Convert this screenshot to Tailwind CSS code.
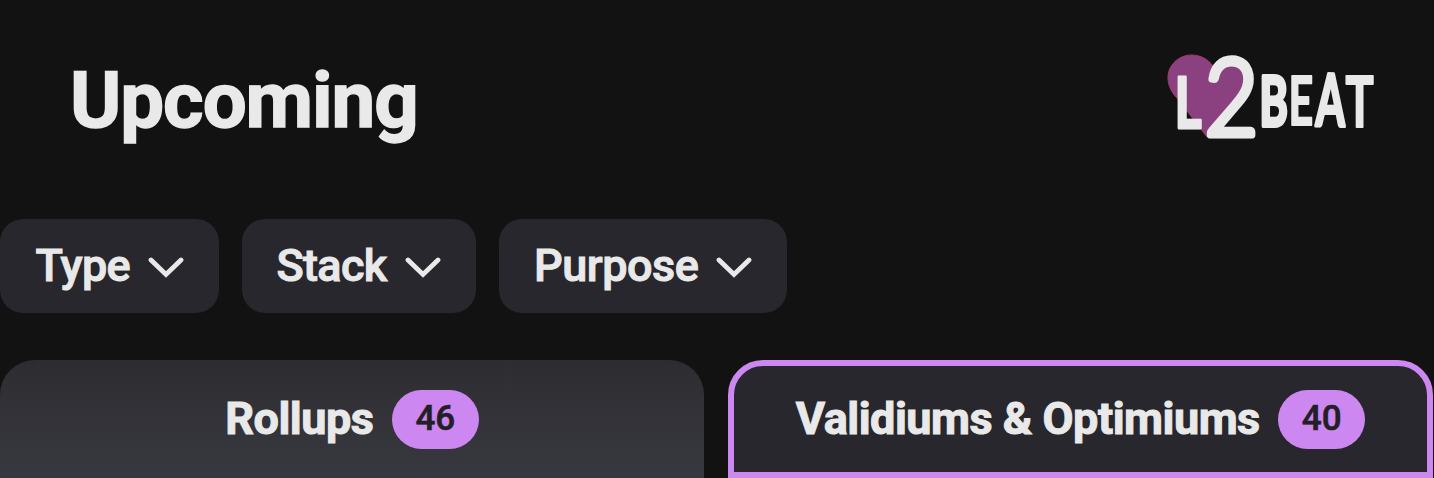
<!DOCTYPE html>
<html lang="en">

<head>
    <meta charset="UTF-8">
    <meta name="viewport" content="width=device-width, initial-scale=1.0">
    <title>Upcoming - L2BEAT</title>
    <script src="https://cdn.jsdelivr.net/npm/@tailwindcss/browser@4"></script>
</head>

<body class="bg-[#121212] text-[#e9e9e9] font-['Roboto',sans-serif] h-[478px] overflow-hidden">
    <!-- Header -->
    <header class="flex items-start justify-between h-[219px] pl-[70px] pr-[58px] pt-[54px]">
        <h1 class="mt-px text-[78px] leading-[92px] font-bold tracking-[-1.1px] [-webkit-text-stroke:1.4px_#e9e9e9]">Upcoming</h1>
        <svg class="w-[210px] h-[86px] overflow-visible" viewBox="1166 54 210 86" role="img" aria-label="L2BEAT">
            <path fill="#8b407f" stroke="#a03a68" stroke-width="1"
                d="M1207 137 L1177 98 C1166 87 1166 73 1172 65 C1182 51 1203 52 1213 66 C1222 56 1239 58 1247 68 C1252 77 1250 88 1243 97 Z" />
            <g fill="#e9e9e9" stroke="#e9e9e9" stroke-linejoin="round" stroke-linecap="round" font-family="Lato" font-size="100">
                <text transform="translate(1174.500 127.500) scale(.52 .7)" stroke-width="4" font-weight="700">L</text>
                <text transform="translate(1204.500 135) scale(.93 1.06)" stroke-width="6.500" font-weight="300">2</text>
                <text transform="translate(1259.500 126) scale(.43 .69)" stroke-width="6" font-weight="700">B</text>
                <text transform="translate(1288.500 124.500) scale(.43 .67)" stroke-width="3" font-weight="700">E</text>
                <text transform="rotate(1 1330 100) translate(1316 126) scale(.42 .72)" stroke-width="5" font-weight="700">A</text>
                <text transform="translate(1345.500 127) scale(.47 .71)" stroke-width="3" font-weight="700">T</text>
            </g>
        </svg>
    </header>

    <!-- Filters -->
    <div class="flex gap-[23.5px] text-[45px] font-medium tracking-[-0.7px] [-webkit-text-stroke:1px_#e9e9e9]">
        <button class="flex items-center gap-[18px] h-[94px] w-[218.5px] pl-[35.5px] rounded-[23px] bg-[#27272d]">
            Type
            <svg class="w-9 h-[21px] mt-[3px]" viewBox="0 0 36 21" fill="none" stroke="currentColor" stroke-width="4.800" stroke-linecap="round">
                <path d="M3 3 18 17.500 33 3" />
            </svg>
        </button>
        <button class="flex items-center gap-[18.5px] h-[94px] w-[233.5px] pl-[34.5px] rounded-[23px] bg-[#27272d]">
            Stack
            <svg class="w-9 h-[21px] mt-[3px]" viewBox="0 0 36 21" fill="none" stroke="currentColor" stroke-width="4.800" stroke-linecap="round">
                <path d="M3 3 18 17.500 33 3" />
            </svg>
        </button>
        <button class="flex items-center gap-[17.5px] h-[94px] w-[287.5px] pl-[35px] rounded-[23px] bg-[#27272d] tracking-[-0.5px]">
            Purpose
            <svg class="w-9 h-[21px] mt-[3px]" viewBox="0 0 36 21" fill="none" stroke="currentColor" stroke-width="4.800" stroke-linecap="round">
                <path d="M3 3 18 17.500 33 3" />
            </svg>
        </button>
    </div>

    <!-- Tabs -->
    <div class="flex gap-6 mt-[47px] h-[118px] text-[45px] font-bold tracking-[-0.5px] whitespace-nowrap [-webkit-text-stroke:1px_#e9e9e9]">
        <button class="flex items-center justify-center gap-[18.5px] w-[704px] rounded-t-[35px] bg-linear-to-b from-[#2d2d31] to-[#383840]">
            Rollups
            <span class="flex items-center justify-center w-[87px] h-[59px] rounded-full bg-[#cc87f1] text-[#221f26] text-[35px] font-medium tracking-normal [-webkit-text-stroke:0.6px_#221f26]">46</span>
        </button>
        <button class="flex items-center justify-center gap-[18.5px] w-[705px] rounded-t-[35px] border-6 border-[#cc87f1] bg-[#27272d]">
            Validiums &amp; Optimiums
            <span class="flex items-center justify-center w-[87px] h-[59px] rounded-full bg-[#cc87f1] text-[#221f26] text-[35px] font-medium tracking-normal [-webkit-text-stroke:0.6px_#221f26]">40</span>
        </button>
    </div>
</body>

</html>
